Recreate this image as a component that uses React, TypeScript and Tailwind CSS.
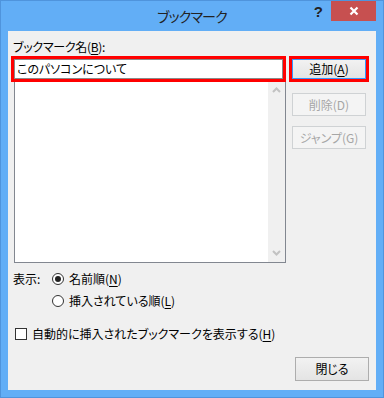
import type { ReactNode } from 'react'

const FONT = "font-['Noto_Sans_CJK_JP','Noto_Sans',sans-serif] [font-feature-settings:'palt']"

function Key({ children }: { children: ReactNode }) {
  return <span className="underline underline-offset-2 decoration-1">{children}</span>
}

function Chevron({ up }: { up?: boolean }) {
  return (
    <svg width="9" height="6" viewBox="0 0 9 6" className="block">
      <polyline
        points={up ? '1,5 4.5,1.5 8,5' : '1,1 4.5,4.5 8,1'}
        fill="none"
        stroke="#c2c2c2"
        strokeWidth="2"
      />
    </svg>
  )
}

function DialogButton({
  children,
  disabled = false,
  focused = false,
  className = '',
}: {
  children: ReactNode
  disabled?: boolean
  focused?: boolean
  className?: string
}) {
  return (
    <button
      type="button"
      disabled={disabled}
      className={[
        'flex w-[74px] items-center justify-center border text-[12px] leading-none',
        disabled
          ? 'border-[#cfd2d4] bg-[#f4f4f4] text-[#a6a6a6]'
          : 'bg-gradient-to-b from-[#f2f2f2] to-[#e4e4e4] text-[#000]',
        focused ? 'border-[#3399ff]' : disabled ? '' : 'border-[#adadad]',
        className,
      ].join(' ')}
    >
      {children}
    </button>
  )
}

function Radio({ checked }: { checked?: boolean }) {
  return (
    <span className="flex h-[12px] w-[12px] items-center justify-center rounded-full border border-[#333] bg-white">
      {checked ? <span className="h-[6px] w-[6px] rounded-full bg-[#222]" /> : null}
    </span>
  )
}

export default function App() {
  return (
    <div className={`flex h-[398px] w-[384px] flex-col border border-[#4f94dc] bg-[#62aef6] ${FONT} text-[12px] text-black`}>
      {/* title bar */}
      <div className="grid h-[30px] grid-cols-[1fr_auto_1fr]">
        <div />
        <div className="flex items-center pt-[1px] text-[14px] tracking-[-0.8px] text-[#222]">ブックマーク</div>
        <div className="flex items-start justify-end pr-[7px]">
          <span className="mr-[8px] mt-[3px] font-['Liberation_Sans',sans-serif] text-[15px] font-bold leading-[16px] text-[#222]">
            ?
          </span>
          <button
            type="button"
            className="flex h-[20px] w-[45px] items-center justify-center bg-[#c75050] text-white"
            aria-label="閉じる"
          >
            <svg width="10" height="10" viewBox="0 0 10 10">
              <path d="M1.5 1.5 L8.5 8.5 M8.5 1.5 L1.5 8.5" stroke="#fff" strokeWidth="2.2" />
            </svg>
          </button>
        </div>
      </div>

      {/* body */}
      <div className="mx-[7px] flex h-[359px] flex-col bg-[#f0f0f0] pl-[3px] pr-[7px] pt-[8px]">
        <div className="flex gap-[3px]">
          <div className="flex w-[278px] flex-col">
            <div className="ml-[2px] leading-[16px] tracking-[-0.3px]">
              ブックマーク名(<Key>B</Key>):
            </div>
            <div className="mt-[1px] border-[3px] border-[#ff0000]">
              <div className="flex h-[20px] items-center border border-[#8a8a8a] bg-white pl-[2px] leading-none">
                このパソコンについて
              </div>
            </div>
            <div className="ml-[3px] flex h-[181px] w-[272px] border border-t-0 border-[#828790] bg-white">
              <div className="flex-1" />
              <div className="flex w-[17px] flex-col items-center justify-between bg-[#f0f0f0] pb-[6px] pt-[5px]">
                <Chevron up />
                <Chevron />
              </div>
            </div>
          </div>

          <div className="flex flex-col pt-[17px]">
            <div className="border-[3px] border-[#ff0000]">
              <DialogButton focused className="h-[20px]">
                追加(<Key>A</Key>)
              </DialogButton>
            </div>
            <DialogButton disabled className="ml-[3px] mt-[11px] h-[23px]">
              削除(D)
            </DialogButton>
            <DialogButton disabled className="ml-[3px] mt-[10px] h-[23px]">
              ジャンプ(G)
            </DialogButton>
          </div>
        </div>

        <div className="ml-[2px] mt-[8px] flex h-[16px] items-center">
          <span className="w-[39px] leading-none">表示:</span>
          <Radio checked />
          <span className="ml-[5px] leading-none">
            名前順(<Key>N</Key>)
          </span>
        </div>
        <div className="ml-[41px] mt-[6px] flex h-[16px] items-center">
          <Radio />
          <span className="ml-[5px] leading-none">
            挿入されている順(<Key>L</Key>)
          </span>
        </div>

        <div className="ml-[4px] mt-[17px] flex h-[16px] items-center">
          <span className="h-[12px] w-[12px] border border-[#333] bg-white" />
          <span className="ml-[5px] leading-none">
            自動的に挿入されたブックマークを表示する(<Key>H</Key>)
          </span>
        </div>

        <div className="mt-[15px] flex justify-end">
          <DialogButton className="h-[24px]">閉じる</DialogButton>
        </div>
      </div>
    </div>
  )
}
